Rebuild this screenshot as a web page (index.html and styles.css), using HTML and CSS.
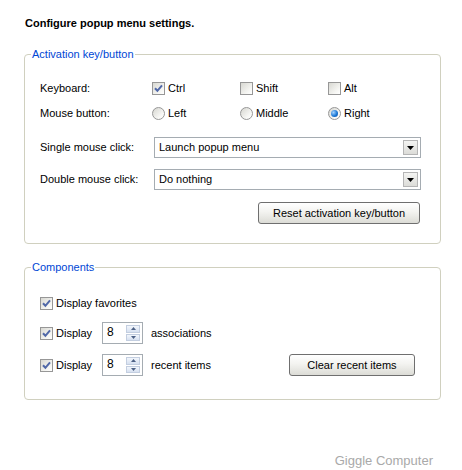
FILE: index.html
```html
<!DOCTYPE html>
<html lang="en">
<head>
    <meta charset="UTF-8">
    <title>Popup menu settings</title>
    <link rel="stylesheet" href="styles.css">
</head>
<body>

    <h1 class="title">Configure popup menu settings.</h1>

    <fieldset class="group activation">
        <legend>Activation key/button</legend>

        <div class="row opts">
            <span class="label">Keyboard:</span>
            <span class="opt"><span class="check on"><svg viewBox="0 0 11 11"><path d="M2 5.2 L4.4 7.8 L9 2.4"/></svg></span>Ctrl</span>
            <span class="opt"><span class="check"></span>Shift</span>
            <span class="opt"><span class="check"></span>Alt</span>
        </div>

        <div class="row opts mouse">
            <span class="label">Mouse button:</span>
            <span class="opt"><span class="radio"></span>Left</span>
            <span class="opt"><span class="radio"></span>Middle</span>
            <span class="opt"><span class="radio on"></span>Right</span>
        </div>

        <div class="row combo-row single">
            <span class="label">Single mouse click:</span>
            <div class="combo">
                <span class="combo-text">Launch popup menu</span>
                <span class="combo-btn"><svg viewBox="0 0 7 4"><path d="M0 0 H7 L3.5 4 Z"/></svg></span>
            </div>
        </div>

        <div class="row combo-row double">
            <span class="label">Double mouse click:</span>
            <div class="combo">
                <span class="combo-text">Do nothing</span>
                <span class="combo-btn"><svg viewBox="0 0 7 4"><path d="M0 0 H7 L3.5 4 Z"/></svg></span>
            </div>
        </div>

        <div class="row actions">
            <button class="btn reset">Reset activation key/button</button>
        </div>
    </fieldset>

    <fieldset class="group components">
        <legend>Components</legend>

        <div class="row comp fav">
            <span class="opt"><span class="check on"><svg viewBox="0 0 11 11"><path d="M2 5.2 L4.4 7.8 L9 2.4"/></svg></span>Display favorites</span>
        </div>

        <div class="row comp count">
            <span class="opt display"><span class="check on"><svg viewBox="0 0 11 11"><path d="M2 5.2 L4.4 7.8 L9 2.4"/></svg></span>Display</span>
            <div class="spin">
                <span class="spin-val">8</span>
                <span class="spin-btns">
                    <span class="spin-up"><svg viewBox="0 0 5 3"><path d="M0 3 L2.5 0 L5 3 Z"/></svg></span>
                    <span class="spin-down"><svg viewBox="0 0 5 3"><path d="M0 0 H5 L2.5 3 Z"/></svg></span>
                </span>
            </div>
            <span class="after">associations</span>
        </div>

        <div class="row comp count">
            <span class="opt display"><span class="check on"><svg viewBox="0 0 11 11"><path d="M2 5.2 L4.4 7.8 L9 2.4"/></svg></span>Display</span>
            <div class="spin">
                <span class="spin-val">8</span>
                <span class="spin-btns">
                    <span class="spin-up"><svg viewBox="0 0 5 3"><path d="M0 3 L2.5 0 L5 3 Z"/></svg></span>
                    <span class="spin-down"><svg viewBox="0 0 5 3"><path d="M0 0 H5 L2.5 3 Z"/></svg></span>
                </span>
            </div>
            <span class="after">recent items</span>
            <button class="btn clear">Clear recent items</button>
        </div>
    </fieldset>

    <div class="brand">Giggle Computer</div>

</body>
</html>
```

FILE: styles.css
```css
body {
    margin: 0;
    background: #fff;
    color: #000;
    font-family: 'Liberation Sans', Arial, sans-serif;
    font-size: 11px;
    line-height: 13px;
}

.title {
    margin: 0;
    padding: 17px 0 0 25px;
    font-size: 11px;
    font-weight: bold;
    line-height: 13px;
}

.group {
    margin: 17px 21px 0 24px;
    padding: 0 19px 19px 15px;
    border: 1px solid #d0d0bf;
    border-radius: 4px;
}

.activation {
    margin-top: 18px;
}

.group legend {
    margin-left: -9px;
    padding: 0 1px;
    color: #0046d5;
    line-height: 13px;
}

.row {
    display: flex;
    align-items: center;
}

.label {
    width: 112px;
    flex: none;
}

.opts {
    height: 20px;
}

.opts .opt {
    width: 88px;
}

.activation .opts {
    margin-top: 17px;
}

.activation .mouse {
    margin-top: 5px;
}

.opt {
    display: flex;
    align-items: center;
}

/* checkbox */
.check {
    box-sizing: border-box;
    width: 13px;
    height: 13px;
    margin-right: 3px;
    border: 1px solid #979797;
    background: linear-gradient(135deg, #d8d8d2, #f6f6f3 70%, #fff);
    flex: none;
}

.check svg {
    display: block;
    width: 11px;
    height: 11px;
    fill: none;
    stroke: #5068a8;
    stroke-width: 2;
}

/* radio */
.radio {
    box-sizing: border-box;
    position: relative;
    width: 13px;
    height: 13px;
    margin-right: 3px;
    border: 1px solid #979797;
    border-radius: 50%;
    background: linear-gradient(135deg, #d6d6d0, #f8f8f6 70%, #fff);
    flex: none;
}

.radio.on::after {
    content: '';
    position: absolute;
    left: 2px;
    top: 2px;
    width: 7px;
    height: 7px;
    border-radius: 50%;
    background: radial-gradient(circle at 35% 35%, #a5d4ff, #1b78d6 55%, #0a4aa0);
}

/* dropdowns */
.combo-row {
    height: 21px;
}

.single {
    margin-top: 14px;
}

.double {
    margin-top: 11px;
}

.combo {
    box-sizing: border-box;
    display: flex;
    align-items: center;
    width: 267px;
    height: 21px;
    margin-left: 2px;
    padding: 2px;
    border: 1px solid #a5acb2;
}

.combo-text {
    flex: 1;
    padding-left: 2px;
}

.combo-btn {
    box-sizing: border-box;
    display: flex;
    align-items: center;
    justify-content: center;
    width: 15px;
    height: 15px;
    border: 1px solid #b5b5b5;
    background: linear-gradient(#f4f4f2, #dcdcd8);
}

.combo-btn svg {
    width: 7px;
    height: 4px;
    fill: #000;
}

/* buttons */
.btn {
    box-sizing: border-box;
    height: 22px;
    border: 1px solid #6f6f6f;
    border-radius: 3px;
    background: linear-gradient(#fff, #f3f3f0 45%, #dcdcd6);
    font: inherit;
    color: #000;
    padding: 0 10px;
}

.actions {
    justify-content: flex-end;
    margin-top: 12px;
    padding-right: 1px;
}

.reset {
    width: 162px;
}

/* components group */
.components {
    padding-bottom: 23px;
}

.components .fav {
    margin-top: 23px;
    height: 13px;
}

.comp.count {
    height: 22px;
    margin-top: 12px;
}

.comp.count + .comp.count {
    margin-top: 10px;
}

.display {
    width: 62px;
}

.spin {
    box-sizing: border-box;
    display: flex;
    width: 41px;
    height: 22px;
    padding: 2px;
    border: 1px solid #a5acb2;
}

.spin-val {
    flex: 1;
    padding-left: 2px;
    font-size: 12px;
    line-height: 14px;
}

.spin-btns {
    display: flex;
    flex-direction: column;
    gap: 1px;
    width: 14px;
}

.spin-btns span {
    box-sizing: border-box;
    flex: 1;
    display: flex;
    align-items: center;
    justify-content: center;
    border: 1px solid #c3cee0;
    background: linear-gradient(#f2f6fc, #d6e0f0);
}

.spin-btns svg {
    width: 5px;
    height: 3px;
    fill: #4d6185;
}

.after {
    margin-left: 8px;
}

.clear {
    width: 126px;
    margin-left: auto;
    margin-right: 6px;
}

.brand {
    margin-top: 53px;
    padding-right: 29px;
    text-align: right;
    color: #a9a9a9;
    font-size: 13px;
    line-height: 15px;
}
```
